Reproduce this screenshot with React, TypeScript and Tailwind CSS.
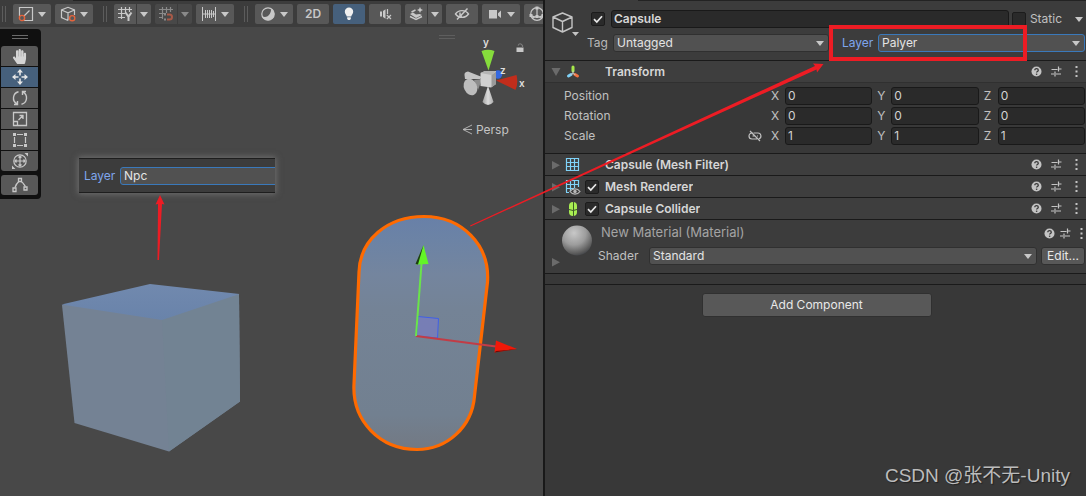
import { useState } from 'react';
import type { ReactNode } from 'react';
import { FaHandPaper } from 'react-icons/fa';
import clsx from 'clsx';

const AXES = ['X', 'Y', 'Z'];

const TRANSFORM = [
    { label: 'Position', values: ['0', '0', '0'] },
    { label: 'Rotation', values: ['0', '0', '0'] },
    { label: 'Scale', values: ['1', '1', '1'] },
];

/* ---------- small shared pieces ---------- */

function Caret({ className }: { className?: string }) {
    return (
        <svg width="8" height="5" viewBox="0 0 8 5" className={clsx('shrink-0', className)} fill="currentColor">
            <path d="M0 0h8L4 5z" />
        </svg>
    );
}

function Foldout({ open }: { open?: boolean }) {
    return (
        <button aria-label="Toggle section" className="flex w-[10px] shrink-0 justify-center text-[#6b6b6b]">
            <svg width="10" height="10" viewBox="0 0 10 10" fill="currentColor">
                <path d={open ? 'M0.500 1h9L5 9z' : 'M1 1v8.500L9 5.200z'} />
            </svg>
        </button>
    );
}

function Check({ label, defaultChecked }: { label: string; defaultChecked?: boolean }) {
    return (
        <span className="grid size-[14px] shrink-0">
            <input
                type="checkbox"
                aria-label={label}
                defaultChecked={defaultChecked}
                className="peer col-start-1 row-start-1 size-[14px] appearance-none rounded-[2px] border border-[#1c1c1c] bg-[#2a2a2a]"
            />
            <svg
                viewBox="0 0 14 14"
                className="pointer-events-none invisible col-start-1 row-start-1 size-[14px] peer-checked:visible"
                fill="none"
                stroke="#e8e8e8"
                strokeWidth="1.700"
            >
                <path d="M3 7.200l2.800 2.800L11 4.200" />
            </svg>
        </span>
    );
}

function Dropdown({ id, value, options, active }: { id: string; value: string; options: string[]; active?: boolean }) {
    const [current, setCurrent] = useState(value);
    return (
        <span className="grid min-w-0 flex-1 items-center">
            <select
                id={id}
                value={current}
                onChange={(e) => setCurrent(e.target.value)}
                className={clsx(
                    'col-start-1 row-start-1 h-[18px] w-full appearance-none rounded-[3px] border bg-[#515151] pl-[3px] pr-4 text-[12px] leading-[16px] text-[#e4e4e4]',
                    active ? 'border-[#3a79bb]' : 'border-[#303030]'
                )}
            >
                {options.map((o) => (
                    <option key={o}>{o}</option>
                ))}
            </select>
            <Caret className="pointer-events-none col-start-1 row-start-1 mr-[5px] justify-self-end text-[#c8c8c8]" />
        </span>
    );
}

function HeaderActions({ tight }: { tight?: boolean }) {
    return (
        <div className={clsx('ml-auto flex shrink-0 items-center text-[#c4c4c4]', tight ? 'gap-[5px] pr-[2px]' : 'gap-[9px] pr-[5px]')}>
            <button aria-label="Help">
                <svg width="11" height="11" viewBox="0 0 11 11" className="block">
                    <circle cx="5.500" cy="5.500" r="5" fill="currentColor" />
                    <path d="M3.800 4.300c0-2.200 3.500-2 3.500 0 0 1.200-1.700 1.200-1.700 2.300" fill="none" stroke="#3a3a3a" strokeWidth="1.300" />
                    <path d="M4.900 7.600h1.400v1.300H4.900z" fill="#3a3a3a" />
                </svg>
            </button>
            <button aria-label="Presets">
                <svg width="11" height="11" viewBox="0 0 11 11" className="block" fill="none" stroke="currentColor" strokeWidth="1.200">
                    <path d="M0.500 3.500h6M7.500 0.500v5M7.500 3h3M0 8h3M4 5.500v5M5 8h5" />
                </svg>
            </button>
            <button aria-label="More" className="flex w-[7px] justify-end">
                <svg width="3" height="11" viewBox="0 0 3 11" className="block" fill="currentColor">
                    <path d="M0.500 0h2v2h-2zM0.500 4.500h2v2h-2zM0.500 9h2v2h-2z" />
                </svg>
            </button>
        </div>
    );
}

/* ---------- scene toolbar ---------- */

function Icon({ children, className }: { children: ReactNode; className?: string }) {
    return (
        <svg
            width="16"
            height="16"
            viewBox="0 0 16 16"
            fill="none"
            stroke="currentColor"
            className={clsx('shrink-0', className)}
        >
            {children}
        </svg>
    );
}

function Tool({ label, icon, menu, active }: { label: string; icon: ReactNode; menu?: boolean; active?: boolean }) {
    return (
        <button
            aria-label={label}
            className={clsx(
                'flex h-5 shrink-0 items-center justify-center rounded-[2px] text-[#c8c8c8]',
                menu ? 'w-[38px] gap-1' : 'w-8',
                active ? 'bg-[#46607c]' : 'bg-[#585858]'
            )}
        >
            {icon}
            {menu && <Caret />}
        </button>
    );
}

function SplitTool({ label, icon, disabled }: { label: string; icon: ReactNode; disabled?: boolean }) {
    const tone = disabled ? 'bg-[#484848] text-[#8a8a8a]' : 'bg-[#585858] text-[#c8c8c8]';
    return (
        <div className="flex shrink-0 gap-px">
            <button aria-label={label} disabled={disabled} className={clsx('flex h-5 w-[22px] items-center justify-center rounded-l-[2px]', tone)}>
                {icon}
            </button>
            <button aria-label={`${label} options`} disabled={disabled} className={clsx('flex h-5 w-[14px] items-center justify-center rounded-r-[2px]', tone)}>
                <Caret />
            </button>
        </div>
    );
}

function ToolGroup({ children }: { children: ReactNode }) {
    return (
        <div className="flex shrink-0 items-center gap-[7px]">
            <span className="h-4 w-1 border-x border-[#5c5c5c]" />
            <div className="flex gap-1">{children}</div>
        </div>
    );
}

function SceneToolbar() {
    return (
        <div className="shrink-0 bg-[#3c3c3c]">
            <div className="ml-[73px] h-px bg-[#232323]" />
            <div className="flex h-[26px] items-center gap-[10px] overflow-hidden pl-[2px]">
                <ToolGroup>
                    <Tool
                        label="Pivot"
                        menu
                        icon={
                            <Icon>
                                <path d="M1.500 10V1.500h13v13H6M6 10l5.500-5.500" strokeWidth="1.200" />
                                <circle cx="4" cy="12" r="2.600" stroke="#e5643c" strokeWidth="1.400" />
                            </Icon>
                        }
                    />
                    <Tool
                        label="Handle rotation"
                        menu
                        icon={
                            <Icon>
                                <path d="M8 14.500l-6.500-3V4L8 1.300 14.500 4v5M1.500 4L8 6.800 14.500 4M8 6.800v7.700" strokeWidth="1.200" />
                                <circle cx="12.200" cy="12.200" r="2.600" stroke="#e5643c" strokeWidth="1.400" />
                            </Icon>
                        }
                    />
                </ToolGroup>
                <ToolGroup>
                    <SplitTool
                        label="Grid"
                        icon={
                            <Icon>
                                <path d="M4.500 1v12M8.500 1v6M12.500 1v5M1 3.500h14M1 7.500h7M1 11.500h7" strokeWidth="1.200" />
                                <path d="M8.500 6.500l3 4.200 3-4.200M11.500 10v5" strokeWidth="2" />
                            </Icon>
                        }
                    />
                    <SplitTool
                        label="Snap"
                        disabled
                        icon={
                            <Icon>
                                <path d="M4.500 1v12M8.500 1v6M12.500 1v5M1 3.500h14M1 7.500h7M1 11.500h4" strokeWidth="1.200" />
                                <path d="M9 8.500h2.500a2.500 2.500 0 0 1 0 5H9" stroke="#a85a48" strokeWidth="2" />
                                <path d="M6 8.500h2M6 13.500h2" strokeWidth="2" />
                            </Icon>
                        }
                    />
                    <Tool
                        label="Snap increment"
                        menu
                        icon={
                            <Icon>
                                <path d="M1.500 1v14M14.500 1v14M1 8h14M4.500 4v8M6.500 4v8M8.500 4v8M10.500 4v8M12.500 5v6" strokeWidth="1" />
                            </Icon>
                        }
                    />
                </ToolGroup>
                <ToolGroup>
                    <Tool
                        label="Shading"
                        menu
                        icon={
                            <Icon>
                                <circle cx="8" cy="8" r="6.200" strokeWidth="1.200" />
                                <path d="M11 2.500a6.300 6.300 0 1 1-9 7.500c4 3 9.500-1 9-7.500z" fill="currentColor" stroke="none" />
                            </Icon>
                        }
                    />
                    <Tool label="2D view" icon={<span className="text-[12px] font-semibold leading-4">2D</span>} />
                    <Tool
                        label="Lighting"
                        active
                        icon={
                            <Icon className="text-[#f0f0f0]">
                                <path
                                    d="M8 1.500a4.200 4.200 0 0 1 4.200 4.200c0 2-1.500 2.800-2 4.800H5.800c-.5-2-2-2.800-2-4.800A4.200 4.200 0 0 1 8 1.500zM6.200 11.200h3.600v1.800l-1 1H7.200l-1-1z"
                                    fill="currentColor"
                                    stroke="none"
                                />
                            </Icon>
                        }
                    />
                    <Tool
                        label="Audio"
                        icon={
                            <Icon>
                                <path d="M3 5.500h2v5H3zM6 5l2.500-1.700v9.500L6 11z" fill="currentColor" stroke="none" />
                                <path d="M10.500 3v5M9.800 9l4.200 4M14 9l-4.200 4" strokeWidth="1.200" />
                            </Icon>
                        }
                    />
                    <SplitTool
                        label="Effects"
                        icon={
                            <Icon>
                                <path
                                    d="M2 8l3-1.500 3 2 3.500-.5L14 9l-6 3zM12 1l.9 2.100L15 4l-2.100.9L12 7l-.9-2.100L9 4l2.100-.9z"
                                    fill="currentColor"
                                    stroke="none"
                                />
                                <path d="M2 10.500l6 3 6-3M3.500 6l4-2" strokeWidth="1.400" />
                            </Icon>
                        }
                    />
                    <Tool
                        label="Hidden objects"
                        icon={
                            <Icon>
                                <path d="M1.500 8C4.500 3.500 11.500 3.500 14.500 8 11.500 12.500 4.500 12.500 1.500 8z" strokeWidth="1.400" />
                                <path d="M6 6.500v3l2 1M13.500 2.500l-10.500 11" strokeWidth="1.500" />
                            </Icon>
                        }
                    />
                    <Tool
                        label="Camera"
                        menu
                        icon={
                            <Icon>
                                <path d="M2 4h8v8.500H2zM11 7.200L14 4.500v7.500l-3-2.500z" fill="currentColor" stroke="none" />
                            </Icon>
                        }
                    />
                    <Tool
                        label="Gizmos"
                        menu
                        icon={
                            <Icon>
                                <circle cx="8" cy="8" r="6.300" strokeWidth="1.200" />
                                <path d="M8 2v8M2 9.500c3 2 9 2 12 0M8 10.500L3 12M8 10.500l5 1.500" strokeWidth="1.200" />
                                <path d="M6.500 0.500h3v3h-3zM0.500 8h3v3h-3zM12.500 8h3v3h-3zM6.500 9h3v3h-3z" fill="currentColor" stroke="none" />
                            </Icon>
                        }
                    />
                </ToolGroup>
            </div>
        </div>
    );
}

/* ---------- scene view ---------- */

const HANDLES = [
    { label: 'Hand', icon: <FaHandPaper className="size-[15px] text-[#d4d4d4]" /> },
    {
        label: 'Move',
        icon: (
            <Icon>
                <path d="M8 2.500v4M8 9.500v4M2.500 8h4M9.500 8h4" strokeWidth="1.600" />
                <path d="M8 0l3 3.500H5zM8 16l3-3.500H5zM0 8l3.500-3v6zM16 8l-3.500-3v6z" fill="currentColor" stroke="none" />
            </Icon>
        ),
    },
    {
        label: 'Rotate',
        icon: (
            <Icon>
                <path d="M6.500 1.700A6.500 6.500 0 0 0 5 13.800M9.500 14.300A6.500 6.500 0 0 0 11 2.200M2 14.500h3.500V11M14 1.500h-3.500V5" strokeWidth="1.400" />
            </Icon>
        ),
    },
    {
        label: 'Scale',
        icon: (
            <Icon>
                <path d="M1.500 1.500h13v13h-13zM1.500 10.500h4v4M6.500 9l4.500-4.500M7.500 4.500H11V8" strokeWidth="1.300" />
            </Icon>
        ),
    },
    {
        label: 'Rect',
        icon: (
            <Icon>
                <path d="M5 2.500h6M5 13.500h6M2.500 5v6M13.500 5v6" strokeWidth="1.200" />
                <path d="M1 1h3v3H1zM12 1h3v3h-3zM1 12h3v3H1zM12 12h3v3h-3z" fill="currentColor" stroke="none" />
            </Icon>
        ),
    },
    {
        label: 'Transform',
        icon: (
            <Icon>
                <circle cx="8" cy="8" r="6.200" strokeWidth="1.200" />
                <path d="M8 3v10M3 8h10M6.500 4.500L8 3l1.500 1.500M6.500 11.500L8 13l1.500-1.500M4.500 6.500L3 8l1.500 1.500M11.500 6.500L13 8l-1.500 1.500" strokeWidth="1.200" />
                <path d="M12.500 0H16v3.500zM3.500 16H0v-3.500z" fill="currentColor" stroke="none" />
            </Icon>
        ),
    },
];

function HandlePalette() {
    return (
        <div className="relative mt-[2px] flex w-[41px] flex-col items-start rounded-r-[4px] bg-[#101010] pb-1 pl-px text-[#c8c8c8]">
            <span className="mb-[7px] ml-[11px] mt-[6px] h-1 w-4 border-y border-[#6a6a6a]" />
            <div className="flex flex-col gap-px">
                {HANDLES.map((h) => (
                    <button
                        key={h.label}
                        aria-label={h.label}
                        className={clsx(
                            'flex h-5 w-[37px] items-center justify-center first:rounded-t-[3px] last:rounded-b-[3px]',
                            h.label === 'Move' ? 'bg-[#46607c] text-[#e6e6e6]' : 'bg-[#585858]'
                        )}
                    >
                        {h.icon}
                    </button>
                ))}
            </div>
            <button aria-label="Edit collider" className="mt-1 flex h-5 w-[37px] items-center justify-center rounded-[3px] bg-[#585858]">
                <Icon>
                    <path d="M3 10.500C4 7.500 5 6 6.800 4.500M9.200 4.500C11 5.500 12 7.500 13.300 9.500" strokeWidth="1.300" />
                    <path d="M6.500 1.500h3v3h-3zM1 11h3v3.500H1zM12 10h3v3h-3z" strokeWidth="1.300" />
                </Icon>
            </button>
        </div>
    );
}

// Objects in the viewport: cube, selected capsule, move handle and the orientation gizmo.
function SceneObjects() {
    return (
        <svg width="544" height="469" viewBox="0 27 544 469" className="absolute left-0 top-0">
            <defs>
                <linearGradient id="cubeTop" x1="0" y1="0" x2="0" y2="1">
                    <stop offset="0" stopColor="#7189ae" />
                    <stop offset="1" stopColor="#6983aa" />
                </linearGradient>
                <linearGradient id="capsule" x1="0" y1="0" x2="0" y2="1">
                    <stop offset="0" stopColor="#6880a8" />
                    <stop offset="0.100" stopColor="#6c83a5" />
                    <stop offset="0.250" stopColor="#74859e" />
                    <stop offset="0.400" stopColor="#748396" />
                    <stop offset="0.850" stopColor="#728090" />
                    <stop offset="1" stopColor="#737983" />
                </linearGradient>
                <linearGradient id="greyCone">
                    <stop offset="0" stopColor="#a0a0a0" />
                    <stop offset="0.500" stopColor="#dcdcdc" />
                    <stop offset="1" stopColor="#aaaaaa" />
                </linearGradient>
            </defs>

            <path d="M62 305L74.500 423 169 451.500 240 401.500 239 294z" fill="#748294" />
            <path d="M162 319.500L169 451.500 240 401.500 239 294z" fill="#728393" />
            <path d="M61.500 304.500L150 284 239.500 294 162 320z" fill="url(#cubeTop)" />

            <path
                d="M359 272C360 240 387 216.500 424 216.500 462 216.500 490 245 487.500 282L474.500 396C472 427 447 449.500 417 449.500 380 449.500 352 421 354 384z"
                fill="url(#capsule)"
                stroke="#ff6a00"
                strokeWidth="3.200"
            />

            <path d="M418 316.500L438.500 318.500 437.500 338 416.500 336z" fill="#7a7ccb" fillOpacity="0.600" stroke="#4060e8" />
            <path d="M416 336L496 346.500" stroke="#c23c46" strokeWidth="1.800" />
            <path d="M416 336L421.500 264" stroke="#6ae44a" strokeWidth="2" />
            <path d="M423.500 245L428.500 264 416 264.500z" fill="#63f527" />
            <path d="M423.500 245L415.500 264 418 264.500z" fill="#1d3d12" />
            <path d="M517 349L496 340.500 494.500 352.500z" fill="#f01808" />
            <path d="M517 349L494.500 352.500 496 351z" fill="#6e0d08" />

            <path d="M481.500 51Q488 48.500 494.500 51L488.500 70.500z" fill="#86dc3c" />
            <circle cx="498" cy="74.500" r="4.200" fill="#3468e0" />
            <path d="M464.500 75Q464 72 468 71.500L482 77 480 79 465 79z" fill="#c4c4c4" />
            <path d="M474 80L482 79 478 90z" fill="#8c8c8c" />
            <ellipse cx="470.500" cy="87" rx="6.500" ry="8.500" transform="rotate(-25 470.500 87)" fill="#bdbdbd" />
            <path d="M488 86L493.500 102Q488 108 482.500 102z" fill="url(#greyCone)" />
            <path d="M480.500 73L485 71H496V84L491 87.500 480.500 86z" fill="#d0d0d0" />
            <path d="M491.500 75L496 71.500V84L491.500 87.500z" fill="#9a9a9a" />
            <path d="M480.500 73L485 71H496L491.500 75z" fill="#b4b4b4" />
            <path d="M496 80.500L516.500 75Q518.500 83 515.500 90z" fill="#c22d1c" />
            <g fill="#dedede" className="text-[10px] font-semibold">
                <text x="483" y="46">y</text>
                <text x="500" y="74">z</text>
                <text x="519" y="87">x</text>
            </g>
            <path d="M472 125L463 129.500 472 134M463 129.500H472" fill="none" stroke="#bdbdbd" strokeWidth="0.900" />

            <path d="M516.500 47.500h7v4.500h-7z" fill="#c8c8c8" />
            <path d="M518 45.500Q520 42 522.500 45.500V48" fill="none" stroke="#7c7c7c" strokeWidth="1.200" />
            <path d="M439 35.500h16M439 38.500h16" stroke="#5e5e5e" />
        </svg>
    );
}

function SceneView() {
    return (
        <section className="flex min-w-0 flex-col border-r-2 border-[#191919] bg-[#484848]">
            <SceneToolbar />
            <div className="relative flex-1 overflow-hidden">
                <SceneObjects />
                <HandlePalette />
                <button className="absolute left-[476px] top-[95px] text-[12px] leading-4 text-[#c4c4c4]">Persp</button>

                {/* Pasted layer field above the cube */}
                <div className="absolute left-[79px] top-[131px] flex h-[35px] w-[196px] items-center overflow-hidden border-b border-t border-[#1e1e1e] bg-[#3c3c3c] pl-[5px] shadow-[0_0_6px_1px_rgba(150,150,150,0.5)]">
                    <label htmlFor="npc-layer" className="w-9 shrink-0 text-[12px] text-[#7fa6ec]">
                        Layer
                    </label>
                    <select
                        id="npc-layer"
                        className="h-[18px] w-[170px] shrink-0 appearance-none rounded-[3px] border border-[#3a79bb] bg-[#515151] pl-[3px] text-[12px] leading-[16px] text-[#e4e4e4]"
                    >
                        <option>Npc</option>
                    </select>
                </div>
            </div>
        </section>
    );
}

/* ---------- inspector ---------- */

function ComponentHeader({ title, icon, enabled, open }: { title: string; icon: ReactNode; enabled?: boolean; open?: boolean }) {
    return (
        <div className="flex h-[22px] items-center border-t border-[#1a1a1a] bg-[#3e3e3e] pl-[6px] pr-[3px]">
            <Foldout open={open} />
            <span className="ml-1 flex w-5 shrink-0">{icon}</span>
            <span className="flex w-5 shrink-0">{enabled && <Check label={`${title} enabled`} defaultChecked />}</span>
            <h2 className="truncate text-[12px] font-semibold text-[#d6d6d6]">{title}</h2>
            <HeaderActions />
        </div>
    );
}

function MeshGrid({ eye }: { eye?: boolean }) {
    return (
        <svg width="16" height="16" viewBox="0 0 16 16" fill="none">
            <path
                d={
                    eye
                        ? 'M1.500 13V1.500h12V8M1 5.500h13M1 9.500h8M5.500 1v12M9.500 1v8M1 13.500h3'
                        : 'M1.500 1.500h12v12h-12zM1 5.500h13M1 9.500h13M5.500 1v13M9.500 1v13'
                }
                stroke="#7fd2f8"
                strokeWidth="1.200"
            />
            {eye && (
                <>
                    <path d="M5 12.500C7.500 9 12.500 9 15 12.500 12.500 16 7.500 16 5 12.500z" fill="#3e3e3e" stroke="#b8b8b8" strokeWidth="1.200" />
                    <circle cx="10" cy="12.500" r="1.700" fill="#b8b8b8" />
                </>
            )}
        </svg>
    );
}

function ObjectHeader() {
    return (
        <div className="bg-[#3c3c3c]">
            <div className="ml-[93px] h-px bg-[#232323]" />
            <div className="flex pb-2 pl-[7px] pr-px pt-[9px]">
                <button aria-label="Object icon" className="w-[35px] shrink-0 self-start pt-[2px]">
                    <svg width="27" height="25" viewBox="0 0 27 25" fill="none" stroke="#c4c4c4" strokeWidth="1.400">
                        <path d="M10.500 1L20 5v10.500L10.500 20 1 15.500V5zM1 5l9.500 4.500L20 5M10.500 9.500V20" strokeLinejoin="round" />
                        <path d="M20 20h7l-3.500 4z" fill="#c4c4c4" stroke="none" />
                    </svg>
                </button>
                <div className="flex min-w-0 flex-1 flex-col gap-[6px]">
                    <div className="flex items-center">
                        <span className="ml-1 mr-[6px] flex">
                            <Check label="Active" defaultChecked />
                        </span>
                        <input
                            aria-label="Name"
                            defaultValue="Capsule"
                            className="h-[18px] min-w-0 flex-1 rounded-[3px] border border-[#191919] bg-[#2a2a2a] px-[2px] text-[12px] font-semibold text-[#d6d6d6]"
                        />
                        <label className="ml-[3px] flex items-center gap-1 text-[12px] text-[#c0c0c0]">
                            <Check label="Static" />
                            Static
                        </label>
                        <button aria-label="Static options" className="ml-[13px] mr-[2px] text-[#c8c8c8]">
                            <Caret className="block" />
                        </button>
                    </div>
                    <div className="grid grid-cols-[26px_216fr_49px_207fr] items-center text-[12px]">
                        <label htmlFor="tag" className="text-[#b8b8b8]">
                            Tag
                        </label>
                        <Dropdown id="tag" value="Untagged" options={['Untagged', 'Respawn', 'Finish']} />
                        <label htmlFor="layer" className="pl-[13px] text-[#7fa6ec]">
                            Layer
                        </label>
                        <Dropdown id="layer" value="Palyer" options={['Default', 'Npc', 'Palyer']} active />
                    </div>
                </div>
            </div>
        </div>
    );
}

function TransformFields() {
    return (
        <div className="flex flex-col gap-[2px] border-t border-[#303030] pb-2 pl-[19px] pr-px pt-1">
            {TRANSFORM.map((row) => (
                <div key={row.label} className="grid grid-cols-[207fr_314fr] items-center text-[12px] text-[#c0c0c0]">
                    <div className="flex items-center justify-between pr-[9px]">
                        {row.label}
                        {row.label === 'Scale' && (
                            <button aria-label="Constrain proportions">
                                <svg width="14" height="12" viewBox="0 0 14 12" className="block" fill="none" stroke="#c0c0c0" strokeWidth="1.200">
                                    <path d="M5.500 3H4a3 3 0 0 0 0 6h5M6 3h4a3 3 0 0 1 1 5.800M4.500 6h2.500M9 6h1M2 1l10 10" />
                                </svg>
                            </button>
                        )}
                    </div>
                    <div className="flex gap-[5px]">
                        {AXES.map((axis, i) => (
                            <label key={axis} className="flex min-w-0 flex-1 items-center">
                                <span className="w-[14px] shrink-0">{axis}</span>
                                <input
                                    aria-label={`${row.label} ${axis}`}
                                    defaultValue={row.values[i]}
                                    className="h-[18px] w-full min-w-0 rounded-[3px] border border-[#191919] bg-[#2a2a2a] px-[2px] text-[12px] text-[#d2d2d2]"
                                />
                            </label>
                        ))}
                    </div>
                </div>
            ))}
        </div>
    );
}

function MaterialBlock() {
    return (
        <div className="flex h-[54px] border-t border-[#1a1a1a] bg-[#3c3c3c] pl-[6px] pr-px">
            <div className="flex items-end pb-[6px]">
                <Foldout />
            </div>
            <svg width="32" height="32" viewBox="0 0 32 32" className="mt-[5px] shrink-0">
                <defs>
                    <radialGradient id="ball" cx="0.400" cy="0.250" r="0.800">
                        <stop offset="0" stopColor="#c8c8c8" />
                        <stop offset="0.500" stopColor="#9c9c9c" />
                        <stop offset="0.850" stopColor="#5c5c5c" />
                        <stop offset="1" stopColor="#3c3f44" />
                    </radialGradient>
                </defs>
                <circle cx="16" cy="15.500" r="15" fill="url(#ball)" />
            </svg>
            <div className="ml-[5px] flex min-w-0 flex-1 flex-col pt-1 text-[#c0c0c0]">
                <div className="flex h-[18px] items-center pl-[3px]">
                    <h2 className="truncate text-[13px] text-[#a4a4a4]">New Material (Material)</h2>
                    <HeaderActions tight />
                </div>
                <div className="mt-[5px] flex items-center text-[12px]">
                    <label htmlFor="shader" className="w-[51px] shrink-0">
                        Shader
                    </label>
                    <Dropdown id="shader" value="Standard" options={['Standard', 'Unlit/Color']} />
                    <button className="ml-1 h-[18px] w-11 shrink-0 rounded-[3px] border border-[#303030] bg-[#585858] text-[12px] leading-4 text-[#e8e8e8]">
                        Edit...
                    </button>
                </div>
            </div>
        </div>
    );
}

function Inspector() {
    return (
        <section className="min-w-0 bg-[#383838]">
            <ObjectHeader />
            <ComponentHeader
                title="Transform"
                open
                icon={
                    <svg width="16" height="16" viewBox="0 0 16 16" fill="none" strokeWidth="3" strokeLinecap="round">
                        <path d="M8 3v4" stroke="#a6e84a" />
                        <path d="M6 10.500L3.500 12" stroke="#7fd2f8" />
                        <path d="M10 10.500l2.500 1.500" stroke="#f4713f" />
                        <path d="M8 7v2.500L6 10.500M8 9.500l2 1" stroke="#c8c8c8" strokeWidth="1" />
                    </svg>
                }
            />
            <TransformFields />
            <ComponentHeader title="Capsule (Mesh Filter)" icon={<MeshGrid />} />
            <ComponentHeader title="Mesh Renderer" enabled icon={<MeshGrid eye />} />
            <ComponentHeader
                title="Capsule Collider"
                enabled
                icon={
                    <svg width="16" height="16" viewBox="0 0 16 16">
                        <rect x="4" y="1" width="8" height="14" rx="4" fill="#a8ee52" />
                        <path d="M4 8.500Q8 10.500 12 8.500M8.500 1v14" fill="none" stroke="#3e5a28" />
                    </svg>
                }
            />
            <MaterialBlock />
            <div className="h-3 border-y border-[#1a1a1a]" />
            <div className="flex justify-center pl-[2px] pt-2">
                <button className="h-6 w-[230px] rounded-[3px] border border-[#303030] bg-[#585858] text-[12px] text-[#e8e8e8]">
                    Add Component
                </button>
            </div>
        </section>
    );
}

/* ---------- page ---------- */

function Annotations() {
    return (
        <svg className="pointer-events-none absolute inset-0 h-full w-full" fill="#ed1c24">
            <rect x="831" y="27" width="194" height="32" fill="none" stroke="#ed1c24" strokeWidth="4" />
            <path d="M470 225.500L815 66 813 63.500 823.500 64 817 72.500 816.500 69.500 470.500 226.500z" />
            <path d="M160 195L164.500 204.500 162 204 159 260H157.500L158 204 155.500 204.500z" />
        </svg>
    );
}

export default function App() {
    return (
        <div className="relative grid min-h-screen grid-cols-[545fr_541fr] overflow-hidden bg-[#383838] font-['Inter','Noto_Sans_CJK_SC',sans-serif]">
            <SceneView />
            <Inspector />
            <Annotations />
            <p className="absolute bottom-[6px] right-4 font-['Liberation_Sans','Noto_Sans_CJK_SC',sans-serif] text-[19px] leading-7 text-[#bcbcbc] [text-shadow:1px_1px_1px_#222]">
                CSDN @张不无-Unity
            </p>
        </div>
    );
}
